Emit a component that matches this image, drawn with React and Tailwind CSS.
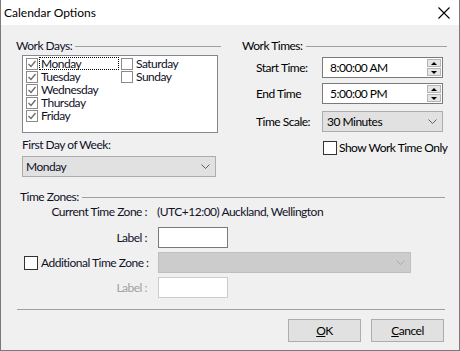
import React from "react";

function Check({ checked, color = "#8a8a8a", stroke = "#6a6a6a", size = 12 }) {
  return (
    <div
      className="shrink-0 bg-white border flex items-center justify-center"
      style={{ width: size, height: size, borderColor: color }}
    >
      {checked && (
        <svg width="10" height="10" viewBox="0 0 10 10">
          <polyline points="1.5,5 4,7.5 8.5,2" fill="none" stroke={stroke} strokeWidth="1.3" />
        </svg>
      )}
    </div>
  );
}

function Chevron({ color = "#606060" }) {
  return (
    <svg width="9" height="5" viewBox="0 0 9 5">
      <polyline points="0.5,0.5 4.5,4.5 8.5,0.5" fill="none" stroke={color} strokeWidth="1" />
    </svg>
  );
}

function Header({ text, className = "" }) {
  return (
    <div className={"flex items-center h-[15px] " + className}>
      <span>{text}</span>
      <div className="flex-1 h-px bg-[#a0a0a0] ml-[3px] mt-[1px]" />
    </div>
  );
}

function Spin() {
  return (
    <div className="flex flex-col gap-[1px] mr-[1px]">
      <div className="w-[14px] h-[8px] bg-[#e6e6e6] border border-[#b5b5b5] flex items-center justify-center">
        <svg width="6" height="3" viewBox="0 0 6 3"><polygon points="0,3 3,0 6,3" fill="#000" /></svg>
      </div>
      <div className="w-[14px] h-[8px] bg-[#e6e6e6] border border-[#b5b5b5] flex items-center justify-center">
        <svg width="6" height="3" viewBox="0 0 6 3"><polygon points="0,0 6,0 3,3" fill="#000" /></svg>
      </div>
    </div>
  );
}

function Day({ label, checked, focus }) {
  return (
    <div className="flex items-center h-[13px] leading-[13px]">
      <Check checked={checked} />
      {focus ? (
        <span className="ml-[1px] w-[80px] h-[13px] leading-[11px] border border-dotted border-black pl-[1px]">
          {label}
        </span>
      ) : (
        <span className="ml-[2px] pl-[1px]">{label}</span>
      )}
    </div>
  );
}

export default function App() {
  return (
    <div className="w-[460px] h-[351px] bg-[#f0f0f0] border-l border-r border-b border-[#7a7a7a] flex flex-col text-[12px] leading-[15px] tracking-[-0.5px] text-[#101028] font-['Lato',sans-serif] overflow-hidden">
      <div className="h-[25px] bg-white flex items-center justify-between pl-[3px] pr-[9px] text-black shrink-0 tracking-normal">
        <span>Calendar Options</span>
        <svg width="12" height="12" viewBox="0 0 12 12">
          <path d="M0.5 0.5 L11.5 11.5 M11.5 0.5 L0.5 11.5" stroke="#000" strokeWidth="1.1" />
        </svg>
      </div>

      <div className="flex mt-[13px]">
        <div className="ml-[15px] w-[205px] flex flex-col">
          <Header text="Work Days:" />
          <div className="mt-[2px] ml-[6px] w-[196px] h-[78px] bg-white border border-[#828790] flex pt-[1px] pl-[3px]">
            <div className="w-[95px] flex flex-col">
              <Day label="Monday" checked focus />
              <Day label="Tuesday" checked />
              <Day label="Wednesday" checked />
              <Day label="Thursday" checked />
              <Day label="Friday" checked />
            </div>
            <div className="flex flex-col">
              <Day label="Saturday" />
              <Day label="Sunday" />
            </div>
          </div>
          <div className="mt-[4px] ml-[6px]">First Day of Week:</div>
          <div className="mt-[4px] ml-[6px] w-[194px] h-[21px] bg-[#e1e1e1] border border-[#adadad] flex items-center justify-between pl-[3px] pr-[5px]">
            <span>Monday</span>
            <Chevron />
          </div>
        </div>

        <div className="ml-[21px] w-[205px] flex flex-col text-black">
          <Header text="Work Times:" />
          <div className="mt-[4px] flex items-center">
            <span className="ml-[14px] w-[66px]">Start Time:</span>
            <div className="w-[121px] h-[21px] bg-white border border-[#7a7a7a] flex items-center justify-between pl-[7px]">
              <span>8:00:00 AM</span>
              <Spin />
            </div>
          </div>
          <div className="mt-[5px] flex items-center">
            <span className="ml-[14px] w-[66px] -mt-[1px]">End Time</span>
            <div className="w-[121px] h-[21px] bg-white border border-[#7a7a7a] flex items-center justify-between pl-[7px]">
              <span>5:00:00 PM</span>
              <Spin />
            </div>
          </div>
          <div className="mt-[7px] flex items-center">
            <span className="ml-[14px] w-[66px]">Time Scale:</span>
            <div className="w-[121px] h-[21px] bg-[#e1e1e1] border border-[#adadad] flex items-center justify-between pl-[4px] pr-[5px]">
              <span>30 Minutes</span>
              <Chevron />
            </div>
          </div>
          <div className="mt-[8px] ml-[81px] flex items-center">
            <Check size={14} color="#333333" />
            <span className="ml-[2px] whitespace-nowrap">Show Work Time Only</span>
          </div>
        </div>
      </div>

      <Header text="Time Zones:" className="mt-[12px] ml-[19px] w-[425px]" />
      <div className="flex items-center h-[15px]">
        <span className="w-[146px] text-right">Current Time Zone :</span>
        <span className="ml-[10px]">(UTC+12:00) Auckland, Wellington</span>
      </div>
      <div className="mt-[8px] flex items-center">
        <span className="w-[146px] text-right">Label :</span>
        <div className="ml-[11px] w-[70px] h-[21px] bg-white border border-[#7a7a7a]" />
      </div>
      <div className="mt-[4px] flex items-center">
        <div className="w-[146px] flex items-center pl-[23px]">
          <Check size={14} color="#333333" />
          <span className="ml-[3px] whitespace-nowrap">Additional Time Zone :</span>
        </div>
        <div className="ml-[11px] w-[253px] h-[21px] bg-[#cccccc] border border-[#bfbfbf] flex items-center justify-end pr-[5px]">
          <Chevron color="#a8a8a8" />
        </div>
      </div>
      <div className="mt-[4px] flex items-center">
        <span className="w-[146px] text-right text-[#a0a0a0]">Label :</span>
        <div className="ml-[11px] w-[70px] h-[21px] bg-white border border-[#cccccc]" />
      </div>

      <div className="mt-[11px] ml-[16px] w-[428px] h-px bg-[#a0a0a0]" />

      <div className="mt-[9px] flex justify-end gap-[10px] pr-[15px] text-black">
        <div className="w-[73px] h-[23px] bg-[#e1e1e1] border border-[#adadad] flex items-center justify-center">
          <span><span className="underline">O</span>K</span>
        </div>
        <div className="w-[73px] h-[23px] bg-[#e1e1e1] border border-[#adadad] flex items-center justify-center">
          <span><span className="underline">C</span>ancel</span>
        </div>
      </div>
    </div>
  );
}
